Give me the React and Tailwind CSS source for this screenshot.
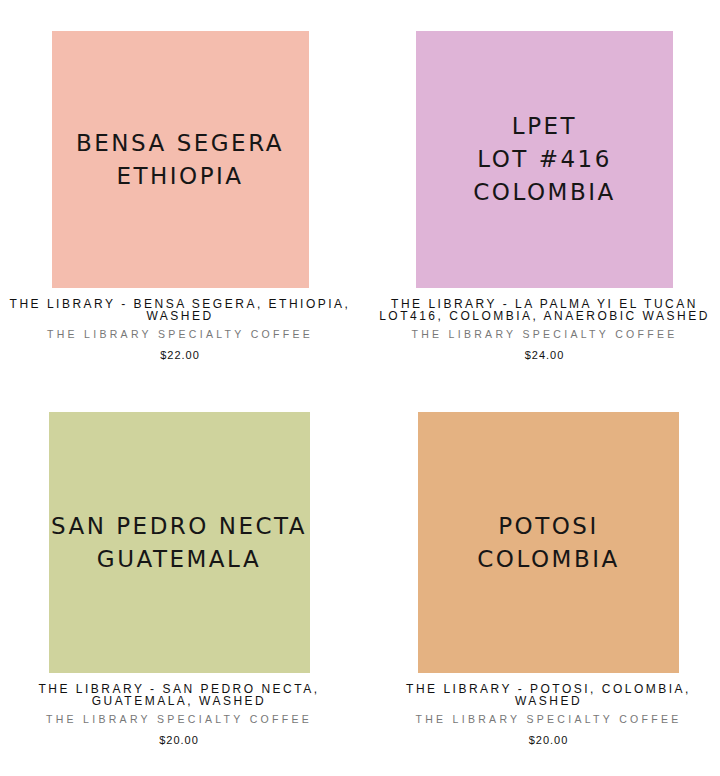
import React from 'react';

const products = [
  {
    label: ['BENSA SEGERA', 'ETHIOPIA'],
    bg: 'bg-[#f4bdae]',
    size: 'w-[257px] h-[257px]',
    shift: '',
    title: 'The Library - Bensa Segera, Ethiopia, Washed',
    price: '$22.00',
  },
  {
    label: ['LPET', 'LOT #416', 'COLOMBIA'],
    bg: 'bg-[#dfb4d7]',
    size: 'w-[257px] h-[257px]',
    shift: '',
    title: 'The Library - La Palma Yi El Tucan Lot416, Colombia, Anaerobic Washed',
    price: '$24.00',
  },
  {
    label: ['SAN PEDRO NECTA', 'GUATEMALA'],
    bg: 'bg-[#cfd39d]',
    size: 'w-[261px] h-[261px]',
    shift: '-translate-x-[1px]',
    title: 'The Library - San Pedro Necta, Guatemala, Washed',
    price: '$20.00',
  },
  {
    label: ['POTOSI', 'COLOMBIA'],
    bg: 'bg-[#e4b282]',
    size: 'w-[261px] h-[261px]',
    shift: 'translate-x-[4px]',
    title: 'The Library - Potosi, Colombia, Washed',
    price: '$20.00',
  },
];

const ProductCard = ({ p }) => (
  <div className={`flex flex-col items-center ${p.shift}`}>
    <div className={`${p.size} ${p.bg} flex flex-col items-center justify-center`}>
      {p.label.map((line, i) => (
        <p key={i} className="text-[23px] leading-[33px] text-[#161616] font-['DejaVu_Sans',sans-serif] tracking-[2.5px] whitespace-nowrap">
          {line}
        </p>
      ))}
    </div>
    <p className="mt-[10px] w-[346px] text-center uppercase text-[12px] leading-[12px] tracking-[2.5px] text-[#111] font-['Liberation_Sans',Arial,sans-serif]">
      {p.title}
    </p>
    <p className="mt-[5px] uppercase text-[10.5px] leading-[14px] tracking-[3.3px] text-[#777] font-['Liberation_Sans',Arial,sans-serif]">
      The Library Specialty Coffee
    </p>
    <p className="mt-[7px] text-[11px] leading-[14px] tracking-[1px] text-[#111] font-['Liberation_Sans',Arial,sans-serif]">
      {p.price}
    </p>
  </div>
);

const App = () => {
  return (
    <div className="w-[720px] h-[776px] bg-white pt-[31px]">
      <div className="grid grid-cols-[360px_369px] gap-y-[50px]">
        {products.map((p, i) => (
          <ProductCard p={p} key={i} />
        ))}
      </div>
    </div>
  );
};

export default App;
